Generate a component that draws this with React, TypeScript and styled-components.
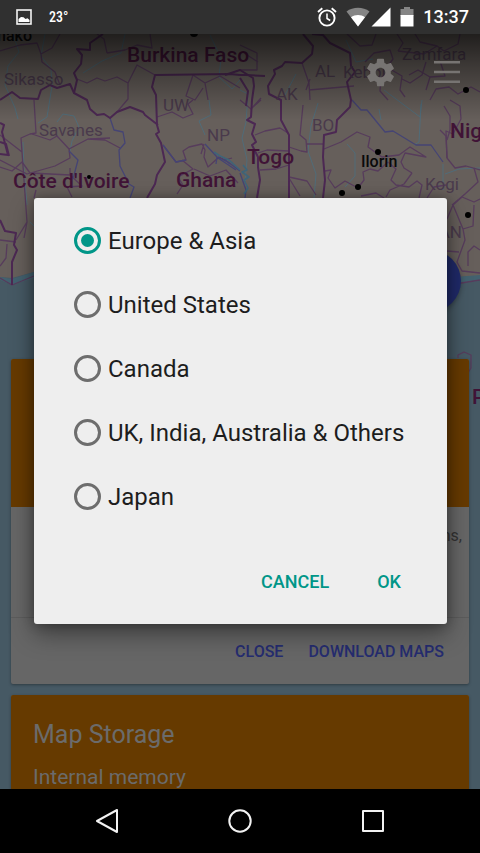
import React, { useState } from "react";
import styled, { createGlobalStyle } from "styled-components";

const GlobalStyle = createGlobalStyle`
  *, *::before, *::after { box-sizing: border-box; }
  body { margin: 0; background: #000; font-family: Roboto, "Liberation Sans", sans-serif; }
  button { font: inherit; border: 0; padding: 0; background: none; cursor: pointer; }
  svg { display: block; }
`;

const Screen = styled.div`
  display: grid;
  grid-template-rows: 34px minmax(0, 1fr) 64px;
  height: 100vh;
  overflow: hidden;
`;

const StatusBar = styled.header`
  display: flex;
  align-items: center;
  justify-content: space-between;
  padding: 0 11px 0 16px;
  background: #303030;
  color: #fff;
`;

const StatusGroup = styled.div<{ $gap: number }>`
  display: flex;
  align-items: center;
  gap: ${(p) => p.$gap}px;
`;

const Temperature = styled.span`
  font-family: "Roboto Condensed", Roboto, sans-serif;
  font-size: 14px;
  line-height: 20px;
  font-weight: 500;
`;

const Clock = styled.time`
  font-size: 18px;
  line-height: 24px;
  font-weight: 500;
`;

const Content = styled.main`
  position: relative;
  overflow: hidden;
  background: #465964;
`;

const MapLayer = styled.svg`
  position: absolute;
  inset: 0;
  width: 100%;
  height: 100%;
`;

const Page = styled.div`
  position: relative;
  display: flex;
  flex-direction: column;
  gap: 11px;
  padding: 0 11px;
`;

const Hero = styled.div`
  display: flex;
  flex-direction: column;
  align-items: flex-end;
  justify-content: space-between;
  height: 314px;
  padding-bottom: 36px;
`;

const Toolbar = styled.div`
  display: flex;
  align-items: center;
  gap: 36px;
  height: 76px;
  padding-right: 8px;
`;

const ToolButton = styled.button`
  color: #777472;
`;

const Fab = styled.button`
  width: 62px;
  height: 62px;
  margin-right: 8px;
  border-radius: 50%;
  background: #202a69;
  box-shadow: 0 2px 5px rgba(0, 0, 0, 0.3);
`;

const Card = styled.section`
  border-radius: 2px;
  background: #666;
  box-shadow: 0 1px 3px rgba(0, 0, 0, 0.35);
  overflow: hidden;
`;

const CardHeader = styled.div<{ $height: number }>`
  min-height: ${(p) => p.$height}px;
  padding: 24px 22px;
  background: #663a00;
  color: #6b6b6b;
`;

const CardTitle = styled.h2`
  margin: 0 0 14px;
  font-size: 25px;
  line-height: 32px;
  font-weight: 400;
`;

const CardSubtitle = styled.p`
  margin: 0;
  font-size: 21px;
  line-height: 24px;
`;

const CardText = styled.p`
  margin: 0;
  height: 110px;
  padding: 18px 7px;
  font-size: 16px;
  line-height: 22px;
  text-align: right;
  color: #333;
`;

const CardActions = styled.div`
  display: flex;
  align-items: center;
  justify-content: flex-end;
  gap: 25px;
  height: 67px;
  padding: 2px 25px 0 0;
  border-top: 1px solid #5c5c5c;
`;

const CardButton = styled.button`
  && {
    font-size: 16px;
    line-height: 24px;
    font-weight: 500;
    color: #252c70;
  }
`;

const Overlay = styled.div`
  position: absolute;
  inset: 0;
  display: flex;
  align-items: center;
  padding: 0 33px 2px 34px;
`;

const Dialog = styled.form`
  flex: 1;
  padding: 11px 24px 19px 40px;
  border-radius: 3px;
  background: #eee;
  box-shadow: 0 10px 24px rgba(0, 0, 0, 0.4), 0 0 12px rgba(0, 0, 0, 0.3);
`;

const Options = styled.fieldset`
  margin: 0 0 30px;
  padding: 0;
  border: 0;
`;

const Option = styled.label`
  display: flex;
  align-items: center;
  gap: 7px;
  height: 64px;
  font-size: 24px;
  line-height: 32px;
  color: #1d1d1d;
  white-space: nowrap;
  cursor: pointer;
`;

const Radio = styled.input`
  appearance: none;
  display: grid;
  place-items: center;
  flex: none;
  width: 27px;
  height: 27px;
  margin: 0;
  border: 3px solid #6d6d6d;
  border-radius: 50%;

  &:checked { border-color: #009688; }
  &:checked::before {
    content: "";
    width: 13px;
    height: 13px;
    border-radius: 50%;
    background: #009688;
  }
`;

const DialogActions = styled.div`
  display: flex;
  justify-content: flex-end;
  gap: 48px;
  padding-right: 22px;
`;

const DialogButton = styled.button`
  && {
    height: 46px;
    font-size: 18px;
    font-weight: 500;
    color: #009688;
  }
`;

const NavBar = styled.nav`
  display: flex;
  justify-content: center;
  background: #000;
`;

const NavButton = styled.button`
  display: grid;
  place-items: center;
  flex: 0 1 133px;
`;

const MapText = styled.text<{ $kind: "country" | "region" | "city" }>`
  font-size: ${(p) => (p.$kind === "country" ? 21 : p.$kind === "city" ? 16 : 17)}px;
  font-weight: ${(p) => (p.$kind === "region" ? 400 : 500)};
  fill: ${(p) => (p.$kind === "country" ? "#401336" : p.$kind === "city" ? "#0a0a0a" : "#4a3a4c")};
`;

type Label = { x: number; y: number; text: string; kind: "country" | "region" | "city"; end?: boolean };

const labels: Label[] = [
  { x: 32, y: 41, text: "Bamako", kind: "city", end: true },
  { x: 127, y: 62, text: "Burkina Faso", kind: "country" },
  { x: 4, y: 85, text: "Sikasso", kind: "region" },
  { x: 39, y: 136, text: "Savanes", kind: "region" },
  { x: 163, y: 111, text: "UW", kind: "region" },
  { x: 207, y: 141, text: "NP", kind: "region" },
  { x: 276, y: 100, text: "AK", kind: "region" },
  { x: 315, y: 77, text: "AL", kind: "region" },
  { x: 343, y: 78, text: "Kebbi", kind: "region" },
  { x: 402, y: 60, text: "Zamfara", kind: "region" },
  { x: 312, y: 131, text: "BO", kind: "region" },
  { x: 13, y: 188, text: "Côte d'Ivoire", kind: "country" },
  { x: 176, y: 187, text: "Ghana", kind: "country" },
  { x: 247, y: 164, text: "Togo", kind: "country" },
  { x: 450, y: 138, text: "Nigeria", kind: "country" },
  { x: 361, y: 167, text: "Ilorin", kind: "city" },
  { x: 425, y: 190, text: "Kogi", kind: "region" },
  { x: 462, y: 238, text: "AN", kind: "region", end: true },
  { x: 472, y: 404, text: "Port", kind: "country" },
];

const countryBorders = [
  "M103 34 90 43 90 50 77 49 82 55 81 64 74 73 77 80 74 93 87 100 90 109 97 115 104 114 110 118 117 112 130 107 143 112 145 115 158 125",
  "M240 75 230 74 155 75 152 87 156 95 157 125 159 132 156 134 161 143 165 162 157 175 155 184 147 198",
  "M225 75 240 70 253 78 254 86 252 100 251 117 247 120 255 124 252 134 256 142 252 145 258 157 258 167 260 180 257 198",
  "M303 34 313 46 312 54 302 63 285 62 282 66 274 70 275 74 268 86 269 94 281 100 281 120 289 135 289 198",
  "M312 34 323 35 330 43 350 53 351 66 355 72 347 82 351 100 350 107 337 120 336 132 324 135 323 157 325 180 323 198",
  "M0 100 12 92 20 98 38 99 41 90 50 85 57 88 70 84 74 93",
  "M0 123 4 125 2 132 8 155 0 154M0 142 6 144 9 156",
  "M0 220 5 231 16 233 14 245 17 250 12 262 12 285",
  "M240 75 246 75 265 76M240 78 248 91 246 106",
];

const regionBorders = [
  "M0 51 20 45 37 43 41 54 52 48 60 34M41 54 42 62 55 72 60 85",
  "M77 79 87 83 97 78 105 81 117 77 128 83 128 99 117 112M128 83 137 65 155 75M107 53 104 39 97 34M107 53 125 50 137 45 152 48 150 34",
  "M193 75 205 83 220 76 240 88M193 75 186 96 195 100 203 88M205 83 208 100",
  "M34 100 36 133 30 134 21 138 22 152 0 135M22 152 27 222 16 240M27 222 24 238",
  "M32 134 50 140 57 136 69 149 70 158 55 166 27 174 0 160M0 167 12 171 22 162 30 173 70 175 70 168",
  "M69 149 88 139 105 140 120 148M90 139 110 138M70 175 82 186 67 187 72 197",
  "M157 117 172 112 183 118 193 114 188 104 193 100",
  "M163 145 176 162 186 160 183 151 189 147 202 144 205 150 204 157 208 167 219 157 225 160 232 158M204 144 201 154",
  "M182 160 193 169 178 177 183 185 177 194M194 169 210 176 226 170 238 183",
  "M240 45 257 53 257 70 240 70M244 53 258 62M302 63 309 83 310 100M309 90 354 86M310 79 306 90",
  "M255 135 265 131 280 128 288 133M258 153 267 150 289 151M260 170 276 169 289 165",
  "M289 147 301 151 307 152 306 140 300 135 303 105M307 144 324 144M289 177 307 181 316 195M289 178 300 196",
  "M324 149 341 142 357 132 370 137 368 147 382 157 399 155 410 147 426 157 405 153 401 162 404 168 412 173",
  "M325 171 331 170 328 178 335 188 345 181 358 188 364 180 363 172 370 169 378 171 388 162",
  "M412 173 404 184 390 190 386 197M388 162 396 169 391 180 396 185 409 187 417 181 422 185 419 198",
  "M388 100 380 91 381 78 390 69 402 76 400 90 405 97M365 62 374 53 390 50 393 59 385 70",
  "M398 51 403 43 397 34M398 51 424 54 437 46 444 51 458 44 460 34M426 90 430 77 418 70 409 75M430 77 445 76 440 61",
  "M450 100 460 106 461 119 453 134 446 131 447 158 455 168 466 166 480 170",
  "M447 158 446 136 440 130M474 168 478 182 465 194 452 205",
  "M36 190 34 198M0 240 16 242M7 244 6 258 0 266",
  "M447 219 453 205 462 197 474 202 480 199M453 205 458 217 463 229 473 226 474 205M463 229 465 240 457 262 462 271 480 273M447 251 459 252",
  "M468 266 468 252 474 246 480 250M444 106 450 116 450 130 447 140",
  "M0 278 12 285 34 276M455 284 480 280",
  "M458 358 458 355 464 352 471 355 471 368 466 376",
  "M240 100 251 109 261 98M261 100 252 108M347 34 360 46 372 45 376 34M426 62 422 75 410 83 402 79M430 100 436 89 449 87 458 94 471 87 480 92",
  "M384 198 376 193 361 196M427 198 434 187 446 185M415 34 420 42 437 46",
];

const rivers = [
  "M13 34 19 52 8 66 5 85 15 108 18 119",
  "M45 34 41 56 51 69 52 86 47 117 38 123",
  "M125 34 121 53 102 61 83 73",
  "M23 142 24 170 27 205M30 222 36 228",
  "M57 122 63 114 74 116 79 127 72 141 70 151",
  "M210 35 221 58 219 77 232 89 240 80M209 100 211 115 199 121 205 135",
  "M240 90 248 94 246 122 242 138 247 160 245 181",
  "M296 74 285 95M318 103 311 126 308 151 316 174 314 198M347 144 355 153 355 176 345 187",
  "M422 100 420 117 384 90M421 104 419 142 414 145M346 40 356 62 373 59",
  "M445 174 459 169 480 168M443 164 443 190M379 109 381 120",
];

const majorRivers = [
  "M110 118 114 130 123 132 125 143 119 150 120 166 129 184 134 187 130 198M69 151 78 160 73 179",
  "M163 145 176 162 186 160M205 144 217 157 228 162 240 171",
  "M352 100 361 110 367 110 385 132 393 131 416 145 431 145 443 162",
  "M240 173 246 190 245 198M217 157 216 164M224 159 230 164M218 158 236 170",
];

const lagoons = [
  "M214 152 220 156 229 160 240 170",
  "M243 165 247 170 242 172 249 177 244 180 248 188 244 194",
];

const cities: [number, number, number][] = [
  [194, 33, 4], [466, 90, 3], [378, 152, 3], [358, 187, 3], [342, 193, 3], [468, 215, 3], [89, 177, 2],
];

function MapCanvas() {
  return (
    <MapLayer viewBox="0 34 480 755" preserveAspectRatio="xMidYMin slice" aria-label="Map">
      <defs>
        <linearGradient id="topShade" x1="0" y1="0" x2="0" y2="1">
          <stop offset="0" stopColor="#000" stopOpacity="0.68" />
          <stop offset="0.35" stopColor="#000" stopOpacity="0.42" />
          <stop offset="1" stopColor="#000" stopOpacity="0" />
        </linearGradient>
      </defs>
      <path d="M0 34H480V276L460 277 240 280 34 272 12 278 0 277Z" fill="#665f5b" />
      <path d="M0 277 12 279 34 272V278L12 285 0 280ZM455 277 480 275V281L455 284Z" fill="#43616f" />
      <g fill="none" strokeLinejoin="round">
        <g stroke="#506c79" strokeWidth="1">{rivers.map((d) => <path key={d} d={d} />)}</g>
        <g stroke="#573c5c" strokeWidth="1.3">{regionBorders.map((d) => <path key={d} d={d} />)}</g>
        <g stroke="#454474" strokeWidth="1.3">{majorRivers.map((d) => <path key={d} d={d} />)}</g>
        <g stroke="#3e6479" strokeWidth="1.6">{lagoons.map((d) => <path key={d} d={d} />)}</g>
        <g stroke="#4c2853" strokeWidth="2">{countryBorders.map((d) => <path key={d} d={d} />)}</g>
      </g>
      {cities.map(([x, y, r]) => <circle key={x} cx={x} cy={y} r={r} fill="#000" />)}
      {labels.map((l) => (
        <MapText key={l.text} x={l.x} y={l.y} $kind={l.kind} textAnchor={l.end ? "end" : "start"}>
          {l.text}
        </MapText>
      ))}
      <rect x="0" y="34" width="480" height="86" fill="url(#topShade)" />
    </MapLayer>
  );
}

const PictureIcon = () => (
  <svg width="16" height="16" viewBox="0 0 16 16" aria-hidden="true">
    <rect x="1" y="1" width="14" height="14" fill="none" stroke="#f4f4f4" strokeWidth="1.6" />
    <path d="M2.5 13V10L5 8 7.5 8.3 9.5 10 11.5 9.3 13.5 11V13Z" fill="#fff" />
  </svg>
);

const AlarmIcon = () => (
  <svg width="20" height="20" viewBox="0 0 20 20" fill="none" stroke="#fff" aria-hidden="true">
    <circle cx="10" cy="11" r="7.6" strokeWidth="1.9" />
    <path d="M10 6.5V11.5L13.2 13.5" strokeWidth="1.5" />
    <path d="M1 5 5.3 1.3M19 5 14.7 1.3" strokeWidth="1.9" />
  </svg>
);

const WifiIcon = () => (
  <svg width="24" height="20" viewBox="0 0 24 20" aria-hidden="true">
    <path d="M0.5 4.5C7 -0.5 17 -0.5 23.5 4.5L12 19.5Z" fill="#858585" />
    <path d="M5 10.3C9 7.3 15 7.3 19 10.3L12 19.5Z" fill="#fff" />
  </svg>
);

const SignalIcon = () => (
  <svg width="20" height="20" viewBox="0 0 20 20" aria-hidden="true">
    <path d="M19.5 0.5V19.5H0.5Z" fill="#fff" />
  </svg>
);

const BatteryIcon = () => (
  <svg width="14" height="20" viewBox="0 0 14 20" aria-hidden="true">
    <path d="M0.5 2H4V0H10V2H13.5V9H0.5Z" fill="#858585" />
    <path d="M0.5 8H13.5V19.5H0.5Z" fill="#fff" />
  </svg>
);

const GearIcon = () => (
  <svg width="33" height="33" viewBox="0 0 24 24" fill="currentColor" aria-hidden="true">
    <path d="M19.43 12.98c.04-.32.07-.64.07-.98s-.03-.66-.07-.98l2.11-1.65c.19-.15.24-.42.12-.64l-2-3.46c-.12-.22-.39-.3-.61-.22l-2.49 1c-.52-.4-1.08-.73-1.69-.98l-.38-2.65C14.46 2.18 14.25 2 14 2h-4c-.25 0-.46.18-.49.42l-.38 2.65c-.61.25-1.17.59-1.69.98l-2.49-1c-.23-.09-.49 0-.61.22l-2 3.46c-.13.22-.07.49.12.64l2.11 1.65c-.04.32-.07.65-.07.98s.03.66.07.98l-2.11 1.65c-.19.15-.24.42-.12.64l2 3.46c.12.22.39.3.61.22l2.49-1c.52.4 1.08.73 1.69.98l.38 2.65c.03.24.24.42.49.42h4c.25 0 .46-.18.49-.42l.38-2.65c.61-.25 1.17-.59 1.69-.98l2.49 1c.23.09.49 0 .61-.22l2-3.46c.12-.22.07-.49-.12-.64l-2.11-1.65zM12 15.5c-1.93 0-3.5-1.57-3.5-3.5s1.57-3.5 3.5-3.5 3.5 1.57 3.5 3.5-1.57 3.5-3.5 3.5z" />
  </svg>
);

const MenuIcon = () => (
  <svg width="28" height="24" viewBox="0 0 28 24" fill="none" stroke="currentColor" strokeWidth="2.4" aria-hidden="true">
    <path d="M1 2.3H27M1 12H27M1 21.7H27" />
  </svg>
);

const navIcons = [
  { name: "Back", shape: <path d="M2 12 22 1V23Z" /> },
  { name: "Home", shape: <circle cx="12" cy="12" r="10.7" /> },
  { name: "Recent apps", shape: <rect x="2" y="2" width="20" height="20" /> },
];

const regions = ["Europe & Asia", "United States", "Canada", "UK, India, Australia & Others", "Japan"];

export default function App() {
  const [selected, setSelected] = useState(regions[0]);

  return (
    <Screen>
      <GlobalStyle />
      <StatusBar>
        <StatusGroup $gap={17}>
          <PictureIcon />
          <Temperature>23°</Temperature>
        </StatusGroup>
        <StatusGroup $gap={9}>
          <AlarmIcon />
          <StatusGroup $gap={1}>
            <WifiIcon />
            <SignalIcon />
          </StatusGroup>
          <BatteryIcon />
          <Clock>13:37</Clock>
        </StatusGroup>
      </StatusBar>
      <Content>
        <MapCanvas />
        <Page>
          <Hero>
            <Toolbar>
              <ToolButton aria-label="Settings"><GearIcon /></ToolButton>
              <ToolButton aria-label="Menu"><MenuIcon /></ToolButton>
            </Toolbar>
            <Fab aria-label="My location" />
          </Hero>
          <Card>
            <CardHeader $height={148} />
            <CardText>regions,</CardText>
            <CardActions>
              <CardButton>CLOSE</CardButton>
              <CardButton>DOWNLOAD MAPS</CardButton>
            </CardActions>
          </Card>
          <Card>
            <CardHeader $height={148}>
              <CardTitle>Map Storage</CardTitle>
              <CardSubtitle>Internal memory</CardSubtitle>
            </CardHeader>
          </Card>
        </Page>
        <Overlay>
          <Dialog role="dialog" aria-label="Region" onSubmit={(e) => e.preventDefault()}>
            <Options>
              {regions.map((name) => (
                <Option key={name}>
                  <Radio
                    type="radio"
                    name="region"
                    value={name}
                    checked={selected === name}
                    onChange={() => setSelected(name)}
                  />
                  {name}
                </Option>
              ))}
            </Options>
            <DialogActions>
              <DialogButton type="button">CANCEL</DialogButton>
              <DialogButton type="submit">OK</DialogButton>
            </DialogActions>
          </Dialog>
        </Overlay>
      </Content>
      <NavBar>
        {navIcons.map(({ name, shape }) => (
          <NavButton key={name} aria-label={name}>
            <svg width="24" height="24" viewBox="0 0 24 24" fill="none" stroke="#f2f2f2" strokeWidth="2" strokeLinejoin="round">
              {shape}
            </svg>
          </NavButton>
        ))}
      </NavBar>
    </Screen>
  );
}
